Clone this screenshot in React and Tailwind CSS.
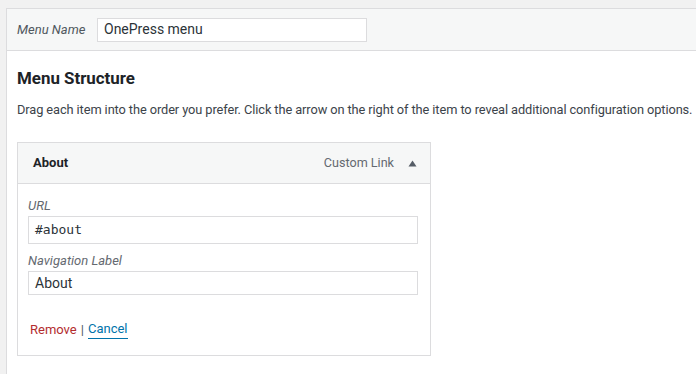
import React from "react";

const FONT = { fontFamily: "Roboto, 'Liberation Sans', sans-serif" };

function MenuItem() {
  return (
    <div className="w-[414px] border border-[#dcdcde] bg-white">
      <div className="flex h-[41px] items-center border-b border-[#dcdcde] bg-[#f6f7f7] pl-[15px] pr-[13px]">
        <span className="text-[13px] font-bold text-[#1d2327]">About</span>
        <span className="ml-auto text-[12.6px] text-[#646970]">Custom Link</span>
        <svg className="ml-[14px]" width="9" height="7" viewBox="0 0 9 7">
          <path d="M4.5 0.5 L8.5 6.5 L0.5 6.5 Z" fill="#555d66" />
        </svg>
      </div>
      <div className="pb-[16px] pl-[10px] pr-[12px] pt-[13px]">
        <label className="block text-[13px] italic leading-[18px] text-[#646970]">URL</label>
        <div className="mt-[1px] flex h-[28px] items-center border border-[#dcdcde] px-[6px]">
          <span className="text-[13px] text-[#2c3338]" style={{ fontFamily: "'DejaVu Sans Mono', monospace" }}>
            #about
          </span>
        </div>
        <label className="mt-[8px] block text-[13px] italic leading-[18px] text-[#646970]">Navigation Label</label>
        <div className="mt-[1px] flex h-[24px] items-center border border-[#dcdcde] px-[6px]">
          <span className="text-[14px] text-[#2c3338]">About</span>
        </div>
        <div className="mt-[25px] flex items-center text-[13px] leading-[18px]">
          <a className="pl-[2px] text-[#b32d2e]">Remove</a>
          <span className="mx-[4px] text-[#50575e]">|</span>
          <a className="border-b border-[#0073aa] text-[#0073aa]">Cancel</a>
        </div>
      </div>
    </div>
  );
}

export default function App() {
  return (
    <div className="h-[374px] overflow-hidden bg-[#f1f1f1] pl-[6px] pt-[8px]" style={FONT}>
      <div className="h-[400px] border border-r-0 border-[#dcdcde] bg-white">
        <div className="flex h-[42px] items-center border-b border-[#dcdcde] bg-[#f6f7f7] pl-[10px]">
          <span className="w-[80px] text-[13px] italic text-[#50575e]">Menu Name</span>
          <div className="flex h-[24px] w-[270px] items-center border border-[#dcdcde] bg-white px-[6px]">
            <span className="text-[14px] text-[#2c3338]">OnePress menu</span>
          </div>
        </div>
        <div className="px-[10px]">
          <h3 className="mt-[16px] text-[16.9px] font-bold leading-[22px] text-[#1d2327]">Menu Structure</h3>
          <p className="mt-[12px] whitespace-nowrap text-[12.8px] leading-[18px] tracking-[-0.09px] text-[#3c434a]">
            Drag each item into the order you prefer. Click the arrow on the right of the item to reveal additional configuration options.
          </p>
          <div className="mt-[23px]">
            <MenuItem />
          </div>
        </div>
      </div>
    </div>
  );
}
